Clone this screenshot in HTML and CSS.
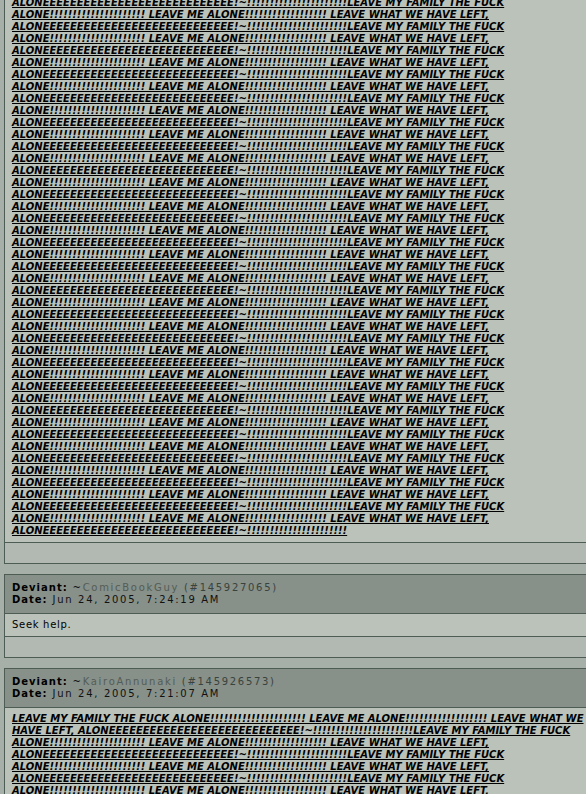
FILE: index.html
```html
<!DOCTYPE html>
<html lang="en">
<head>
  <meta charset="UTF-8" />
  <title>Comments</title>
  <link rel="stylesheet" href="styles.css">
</head>
<body>
  <div class="comment cut">
    <div class="comment-body">
      <p class="rant">ALONEEEEEEEEEEEEEEEEEEEEEEEEEEEE!~!!!!!!!!!!!!!!!!!!!!!!LEAVE MY FAMILY THE FUCK ALONE!!!!!!!!!!!!!!!!!!!!! LEAVE ME ALONE!!!!!!!!!!!!!!!!!! LEAVE WHAT WE HAVE LEFT,
ALONEEEEEEEEEEEEEEEEEEEEEEEEEEEE!~!!!!!!!!!!!!!!!!!!!!!!LEAVE MY FAMILY THE FUCK ALONE!!!!!!!!!!!!!!!!!!!!! LEAVE ME ALONE!!!!!!!!!!!!!!!!!! LEAVE WHAT WE HAVE LEFT,
ALONEEEEEEEEEEEEEEEEEEEEEEEEEEEE!~!!!!!!!!!!!!!!!!!!!!!!LEAVE MY FAMILY THE FUCK ALONE!!!!!!!!!!!!!!!!!!!!! LEAVE ME ALONE!!!!!!!!!!!!!!!!!! LEAVE WHAT WE HAVE LEFT,
ALONEEEEEEEEEEEEEEEEEEEEEEEEEEEE!~!!!!!!!!!!!!!!!!!!!!!!LEAVE MY FAMILY THE FUCK ALONE!!!!!!!!!!!!!!!!!!!!! LEAVE ME ALONE!!!!!!!!!!!!!!!!!! LEAVE WHAT WE HAVE LEFT,
ALONEEEEEEEEEEEEEEEEEEEEEEEEEEEE!~!!!!!!!!!!!!!!!!!!!!!!LEAVE MY FAMILY THE FUCK ALONE!!!!!!!!!!!!!!!!!!!!! LEAVE ME ALONE!!!!!!!!!!!!!!!!!! LEAVE WHAT WE HAVE LEFT,
ALONEEEEEEEEEEEEEEEEEEEEEEEEEEEE!~!!!!!!!!!!!!!!!!!!!!!!LEAVE MY FAMILY THE FUCK ALONE!!!!!!!!!!!!!!!!!!!!! LEAVE ME ALONE!!!!!!!!!!!!!!!!!! LEAVE WHAT WE HAVE LEFT,
ALONEEEEEEEEEEEEEEEEEEEEEEEEEEEE!~!!!!!!!!!!!!!!!!!!!!!!LEAVE MY FAMILY THE FUCK ALONE!!!!!!!!!!!!!!!!!!!!! LEAVE ME ALONE!!!!!!!!!!!!!!!!!! LEAVE WHAT WE HAVE LEFT,
ALONEEEEEEEEEEEEEEEEEEEEEEEEEEEE!~!!!!!!!!!!!!!!!!!!!!!!LEAVE MY FAMILY THE FUCK ALONE!!!!!!!!!!!!!!!!!!!!! LEAVE ME ALONE!!!!!!!!!!!!!!!!!! LEAVE WHAT WE HAVE LEFT,
ALONEEEEEEEEEEEEEEEEEEEEEEEEEEEE!~!!!!!!!!!!!!!!!!!!!!!!LEAVE MY FAMILY THE FUCK ALONE!!!!!!!!!!!!!!!!!!!!! LEAVE ME ALONE!!!!!!!!!!!!!!!!!! LEAVE WHAT WE HAVE LEFT,
ALONEEEEEEEEEEEEEEEEEEEEEEEEEEEE!~!!!!!!!!!!!!!!!!!!!!!!LEAVE MY FAMILY THE FUCK ALONE!!!!!!!!!!!!!!!!!!!!! LEAVE ME ALONE!!!!!!!!!!!!!!!!!! LEAVE WHAT WE HAVE LEFT,
ALONEEEEEEEEEEEEEEEEEEEEEEEEEEEE!~!!!!!!!!!!!!!!!!!!!!!!LEAVE MY FAMILY THE FUCK ALONE!!!!!!!!!!!!!!!!!!!!! LEAVE ME ALONE!!!!!!!!!!!!!!!!!! LEAVE WHAT WE HAVE LEFT,
ALONEEEEEEEEEEEEEEEEEEEEEEEEEEEE!~!!!!!!!!!!!!!!!!!!!!!!LEAVE MY FAMILY THE FUCK ALONE!!!!!!!!!!!!!!!!!!!!! LEAVE ME ALONE!!!!!!!!!!!!!!!!!! LEAVE WHAT WE HAVE LEFT,
ALONEEEEEEEEEEEEEEEEEEEEEEEEEEEE!~!!!!!!!!!!!!!!!!!!!!!!LEAVE MY FAMILY THE FUCK ALONE!!!!!!!!!!!!!!!!!!!!! LEAVE ME ALONE!!!!!!!!!!!!!!!!!! LEAVE WHAT WE HAVE LEFT,
ALONEEEEEEEEEEEEEEEEEEEEEEEEEEEE!~!!!!!!!!!!!!!!!!!!!!!!LEAVE MY FAMILY THE FUCK ALONE!!!!!!!!!!!!!!!!!!!!! LEAVE ME ALONE!!!!!!!!!!!!!!!!!! LEAVE WHAT WE HAVE LEFT,
ALONEEEEEEEEEEEEEEEEEEEEEEEEEEEE!~!!!!!!!!!!!!!!!!!!!!!!LEAVE MY FAMILY THE FUCK ALONE!!!!!!!!!!!!!!!!!!!!! LEAVE ME ALONE!!!!!!!!!!!!!!!!!! LEAVE WHAT WE HAVE LEFT,
ALONEEEEEEEEEEEEEEEEEEEEEEEEEEEE!~!!!!!!!!!!!!!!!!!!!!!!LEAVE MY FAMILY THE FUCK ALONE!!!!!!!!!!!!!!!!!!!!! LEAVE ME ALONE!!!!!!!!!!!!!!!!!! LEAVE WHAT WE HAVE LEFT,
ALONEEEEEEEEEEEEEEEEEEEEEEEEEEEE!~!!!!!!!!!!!!!!!!!!!!!!LEAVE MY FAMILY THE FUCK ALONE!!!!!!!!!!!!!!!!!!!!! LEAVE ME ALONE!!!!!!!!!!!!!!!!!! LEAVE WHAT WE HAVE LEFT,
ALONEEEEEEEEEEEEEEEEEEEEEEEEEEEE!~!!!!!!!!!!!!!!!!!!!!!!LEAVE MY FAMILY THE FUCK ALONE!!!!!!!!!!!!!!!!!!!!! LEAVE ME ALONE!!!!!!!!!!!!!!!!!! LEAVE WHAT WE HAVE LEFT,
ALONEEEEEEEEEEEEEEEEEEEEEEEEEEEE!~!!!!!!!!!!!!!!!!!!!!!!LEAVE MY FAMILY THE FUCK ALONE!!!!!!!!!!!!!!!!!!!!! LEAVE ME ALONE!!!!!!!!!!!!!!!!!! LEAVE WHAT WE HAVE LEFT,
ALONEEEEEEEEEEEEEEEEEEEEEEEEEEEE!~!!!!!!!!!!!!!!!!!!!!!!LEAVE MY FAMILY THE FUCK ALONE!!!!!!!!!!!!!!!!!!!!! LEAVE ME ALONE!!!!!!!!!!!!!!!!!! LEAVE WHAT WE HAVE LEFT,
ALONEEEEEEEEEEEEEEEEEEEEEEEEEEEE!~!!!!!!!!!!!!!!!!!!!!!!LEAVE MY FAMILY THE FUCK ALONE!!!!!!!!!!!!!!!!!!!!! LEAVE ME ALONE!!!!!!!!!!!!!!!!!! LEAVE WHAT WE HAVE LEFT,
ALONEEEEEEEEEEEEEEEEEEEEEEEEEEEE!~!!!!!!!!!!!!!!!!!!!!!!LEAVE MY FAMILY THE FUCK ALONE!!!!!!!!!!!!!!!!!!!!! LEAVE ME ALONE!!!!!!!!!!!!!!!!!! LEAVE WHAT WE HAVE LEFT,
ALONEEEEEEEEEEEEEEEEEEEEEEEEEEEE!~!!!!!!!!!!!!!!!!!!!!!!</p>
    </div>
    <div class="comment-foot"></div>
  </div>

  <div class="comment">
    <div class="comment-head">
      <div><b>Deviant:</b> ~<a class="user" href="#">ComicBookGuy</a> <span class="cid">(#145927065)</span></div>
      <div><b>Date:</b> Jun 24, 2005, 7:24:19 AM</div>
    </div>
    <div class="comment-body">
      <p>Seek help.</p>
    </div>
    <div class="comment-foot"></div>
  </div>

  <div class="comment">
    <div class="comment-head">
      <div><b>Deviant:</b> ~<a class="user" href="#">KairoAnnunaki</a> <span class="cid">(#145926573)</span></div>
      <div><b>Date:</b> Jun 24, 2005, 7:21:07 AM</div>
    </div>
    <div class="comment-body">
      <p class="rant">LEAVE MY FAMILY THE FUCK ALONE!!!!!!!!!!!!!!!!!!!!! LEAVE ME ALONE!!!!!!!!!!!!!!!!!! LEAVE WHAT WE HAVE LEFT,
ALONEEEEEEEEEEEEEEEEEEEEEEEEEEEE!~!!!!!!!!!!!!!!!!!!!!!!LEAVE MY FAMILY THE FUCK ALONE!!!!!!!!!!!!!!!!!!!!! LEAVE ME ALONE!!!!!!!!!!!!!!!!!! LEAVE WHAT WE HAVE LEFT,
ALONEEEEEEEEEEEEEEEEEEEEEEEEEEEE!~!!!!!!!!!!!!!!!!!!!!!!LEAVE MY FAMILY THE FUCK ALONE!!!!!!!!!!!!!!!!!!!!! LEAVE ME ALONE!!!!!!!!!!!!!!!!!! LEAVE WHAT WE HAVE LEFT,
ALONEEEEEEEEEEEEEEEEEEEEEEEEEEEE!~!!!!!!!!!!!!!!!!!!!!!!LEAVE MY FAMILY THE FUCK ALONE!!!!!!!!!!!!!!!!!!!!! LEAVE ME ALONE!!!!!!!!!!!!!!!!!! LEAVE WHAT WE HAVE LEFT,
ALONEEEEEEEEEEEEEEEEEEEEEEEEEEEE!~!!!!!!!!!!!!!!!!!!!!!!LEAVE MY FAMILY THE FUCK ALONE!!!!!!!!!!!!!!!!!!!!! LEAVE ME ALONE!!!!!!!!!!!!!!!!!! LEAVE WHAT WE HAVE LEFT,
ALONEEEEEEEEEEEEEEEEEEEEEEEEEEEE!~!!!!!!!!!!!!!!!!!!!!!!LEAVE MY FAMILY THE FUCK ALONE!!!!!!!!!!!!!!!!!!!!! LEAVE ME ALONE!!!!!!!!!!!!!!!!!! LEAVE WHAT WE HAVE LEFT,</p>
    </div>
    <div class="comment-foot"></div>
  </div>
</body>
</html>
```

FILE: styles.css
```css
html {
  overflow: hidden;
}
body {
  margin: 0;
  background: #a7b0a8;
  font-family: 'DejaVu Sans', Verdana, sans-serif;
  font-size: 10px;
  line-height: 12px;
  color: #000;
}
p {
  margin: 0;
}
.comment {
  width: 602px;
  margin: 0 0 10px 4px;
  border: 1px solid #4d5c54;
}
/* top of this one is scrolled out of view */
.comment.cut {
  margin-top: -9px;
}
.comment-head {
  background: #879089;
  padding: 7px;
  border-bottom: 1px solid #4d5c54;
  letter-spacing: 1.7px;
  color: #111;
}
.comment-head b {
  letter-spacing: 1px;
  color: #000;
}
.user {
  color: #535d57;
  text-decoration: none;
}
.cid {
  color: #39433d;
}
.comment-body {
  background: #bac2ba;
  padding: 5px 7px;
  border-bottom: 1px solid #4d5c54;
  letter-spacing: 0.7px;
}
.rant {
  font-weight: bold;
  font-style: italic;
  text-decoration: underline;
  letter-spacing: 0;
}
.comment-foot {
  background: #b2b9b3;
  height: 20px;
}
```
